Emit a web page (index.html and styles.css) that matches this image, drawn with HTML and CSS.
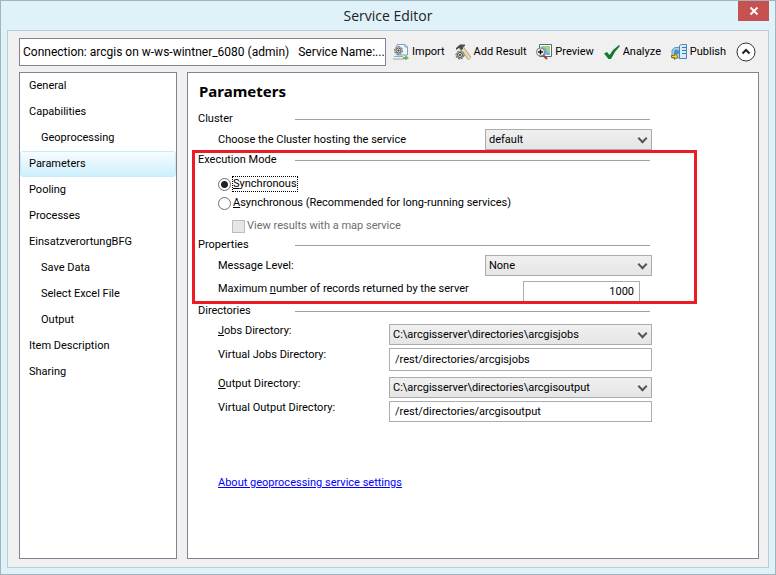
FILE: index.html
```html
<!DOCTYPE html>
<html lang="en">
<head>
    <meta charset="UTF-8">
    <title>Service Editor</title>
    <link rel="stylesheet" href="styles.css">
</head>
<body>
<div class="window">
    <header class="titlebar">
        <h1 class="title">Service Editor</h1>
        <button type="button" class="close" aria-label="Close">
            <svg width="10" height="8" viewBox="0 0 10 8"><path d="M1.5 .5L8.5 7.5M8.5 .5L1.5 7.5" stroke="#fff" stroke-width="2"/></svg>
        </button>
    </header>
    <div class="frame">
        <div class="toolbar">
            <div class="connection">
                <span>Connection: arcgis on w-ws-wintner_6080 (admin)</span>
                <span>Service Name:...</span>
            </div>
            <div class="tools">
                <button type="button" class="tool">
                    <svg width="16" height="16" viewBox="0 0 16 16">
                        <path d="M4 .5h8l2.500 2.500V11H4z" fill="#edf4fb" stroke="#7ba3c6"/>
                        <path d="M12 .5V3h2.500" fill="none" stroke="#7ba3c6"/>
                        <circle cx="5.500" cy="6.500" r="4" fill="#ccc" stroke="#666" stroke-dasharray="2 1"/>
                        <circle cx="5.500" cy="6.500" r="2.500" fill="#ddd" stroke="#555"/>
                        <circle cx="5.500" cy="6.500" r="1" fill="#333"/>
                        <path d="M1 12.500h9M0 15h11" stroke="#8fabc0"/>
                        <path d="M10 13h2v-2l4 3-4 2.500V15h-2z" fill="#74b352"/>
                    </svg>
                    Import
                </button>
                <button type="button" class="tool">
                    <svg width="16" height="16" viewBox="0 0 16 16">
                        <path d="M7 4l8 11" stroke="#86714e" stroke-width="4"/>
                        <path d="M7 4l8 11" stroke="#ead9ae" stroke-width="3"/>
                        <path d="M1 4l4-3.500h5V2L8 3v2L6 6 4 4 1 6z" fill="#4c4c4c"/>
                        <circle cx="5" cy="11" r="4" fill="#ccc" stroke="#555" stroke-dasharray="2 1"/>
                        <circle cx="5" cy="11" r="2.500" fill="#ddd" stroke="#444"/>
                        <circle cx="5" cy="11" r="1" fill="#333"/>
                    </svg>
                    Add Result
                </button>
                <button type="button" class="tool">
                    <svg width="16" height="16" viewBox="0 0 16 16">
                        <path d="M3.500 .5h12v12h-12z" fill="#fff" stroke="#4d6d86"/>
                        <path d="M5 2h9v9H5z" fill="#a9d47c"/>
                        <path d="M6 3l4 1 1 4 3 1v2H8z" fill="#6fb4dd"/>
                        <path d="M7 11l4 4" stroke="#a03c34" stroke-width="2"/>
                        <circle cx="4.500" cy="8" r="4" fill="#fff" stroke="#777"/>
                        <path d="M4.500 5.500v5M2 8h5" stroke="#111" stroke-width="1.500"/>
                    </svg>
                    Preview
                </button>
                <button type="button" class="tool">
                    <svg width="16" height="16" viewBox="0 0 16 16"><path d="M0 9.500L3 8l2.500 3Q9 5 15 1L16 2Q10 8 7 15H4.500z" fill="#157a30"/></svg>
                    Analyze
                </button>
                <button type="button" class="tool">
                    <svg width="16" height="16" viewBox="0 0 16 16">
                        <path d="M1 6l3-2.500h5V14H1z" fill="#a9d0ee" stroke="#5d93c0"/>
                        <circle cx="5.500" cy="8" r="2.500" fill="#4a90cf"/>
                        <path d="M8.500 1.500l2-1h5v14h-7z" fill="#d9ecfa" stroke="#4f83b0"/>
                        <path d="M11 3.500h4M11 6.500h4M11 9.500h4" stroke="#3e78b4"/>
                        <path d="M.5 11.500h3v-2l3.500 3-3.500 3v-2h-3z" fill="#f6d433" stroke="#8d7016"/>
                    </svg>
                    Publish
                </button>
                <button type="button" class="collapse" aria-label="Collapse">
                    <svg width="20" height="20" viewBox="0 0 20 20">
                        <circle cx="10" cy="10" r="9" fill="#fff" stroke="#333"/>
                        <path d="M6.500 11.500L10 8l3.500 3.500" fill="none" stroke="#222" stroke-width="2"/>
                    </svg>
                </button>
            </div>
        </div>
        <div class="panels">
            <nav class="sidebar">
                <a class="item" href="#">General</a>
                <a class="item" href="#">Capabilities</a>
                <a class="item child" href="#">Geoprocessing</a>
                <a class="item selected" href="#">Parameters</a>
                <a class="item" href="#">Pooling</a>
                <a class="item" href="#">Processes</a>
                <a class="item" href="#">EinsatzverortungBFG</a>
                <a class="item child" href="#">Save Data</a>
                <a class="item child" href="#">Select Excel File</a>
                <a class="item child" href="#">Output</a>
                <a class="item" href="#">Item Description</a>
                <a class="item" href="#">Sharing</a>
            </nav>
            <main class="content">
                <h2 class="heading">Parameters</h2>
                <section class="group">
                    <h3 class="legend">Cluster</h3>
                    <div class="row">
                        <label for="cluster">Choose the Cluster hosting the service</label>
                        <span class="picker short"><select id="cluster"><option>default</option></select></span>
                    </div>
                </section>
                <div class="highlight">
                    <section class="group">
                        <h3 class="legend">Execution Mode</h3>
                        <div class="modes">
                            <div class="option">
                                <input type="radio" name="mode" id="sync" checked>
                                <label for="sync" class="focused"><u>S</u>ynchronous</label>
                            </div>
                            <div class="option">
                                <input type="radio" name="mode" id="async">
                                <label for="async"><u>A</u>synchronous (Recommended for long-running services)</label>
                            </div>
                            <div class="option nested">
                                <input type="checkbox" id="mapservice" disabled>
                                <label for="mapservice">View results with a map service</label>
                            </div>
                        </div>
                    </section>
                    <section class="group">
                        <h3 class="legend">Properties</h3>
                        <div class="row">
                            <label for="level">Message Level:</label>
                            <span class="picker short"><select id="level"><option>None</option></select></span>
                        </div>
                        <div class="row records">
                            <label for="records">Maximum <u>n</u>umber of records returned by the server</label>
                            <input type="text" id="records" class="text number" value="1000">
                        </div>
                    </section>
                </div>
                <section class="group">
                    <h3 class="legend">Directories</h3>
                    <div class="directories">
                        <label for="jobs"><u>J</u>obs Directory:</label>
                        <span class="picker"><select id="jobs"><option>C:\arcgisserver\directories\arcgisjobs</option></select></span>
                        <label for="vjobs">Virtual Jobs Directory:</label>
                        <input type="text" id="vjobs" class="text" value="/rest/directories/arcgisjobs">
                        <label for="output" class="second"><u>O</u>utput Directory:</label>
                        <span class="picker second"><select id="output"><option>C:\arcgisserver\directories\arcgisoutput</option></select></span>
                        <label for="voutput">Virtual Output Directory:</label>
                        <input type="text" id="voutput" class="text" value="/rest/directories/arcgisoutput">
                    </div>
                </section>
                <a class="about" href="#">About geoprocessing service settings</a>
            </main>
        </div>
    </div>
</div>
</body>
</html>
```

FILE: styles.css
```css
*{
    box-sizing: border-box;
}
body{
    margin: 0;
    font: 11px/16px Roboto, sans-serif;
    color: #000;
}
button, input, select{
    font: inherit;
    color: inherit;
    margin: 0;
}
.window{
    display: flex;
    flex-direction: column;
    min-height: 100vh;
    padding: 0 6px 6px;
    background: #dff2f9;
    border: solid 1px #a3b5bb;
}
.titlebar{
    display: flex;
    height: 29px;
    position: relative;
    justify-content: center;
}
.title{
    margin: 0;
    font: 14px/30px "Open Sans", sans-serif;
    color: #222;
}
.close{
    position: absolute;
    right: 0;
    top: 0;
    width: 31px;
    height: 20px;
    padding: 0;
    border: 0;
    background: #c75050;
}
.close svg{
    display: block;
    margin: auto;
}
.frame{
    flex: 1;
    display: flex;
    flex-direction: column;
    gap: 6px;
    padding: 7px 9px 8px 11px;
    background: #f0f0f0;
    border: solid 1px #b9cdd3;
}
.toolbar{
    display: flex;
    gap: 7px;
}
.connection{
    display: flex;
    gap: 9px;
    width: 367px;
    height: 28px;
    padding-left: 3px;
    background: #fff;
    border: solid 1px #828297;
    font-size: 12px;
    line-height: 26px;
    white-space: nowrap;
    overflow: hidden;
}
.tools{
    flex: 1;
    display: flex;
    align-items: center;
    justify-content: space-between;
    padding-right: 3px;
}
.tool{
    display: flex;
    align-items: center;
    gap: 3px;
    padding: 0;
    border: 0;
    background: none;
    white-space: nowrap;
}
.collapse{
    padding: 0;
    border: 0;
    background: none;
}
.collapse svg{
    display: block;
}
.panels{
    flex: 1;
    display: flex;
    gap: 10px;
}
.sidebar{
    width: 158px;
    background: #fff;
    border: solid 1px #828297;
}
.item{
    display: block;
    height: 26px;
    padding-left: 8px;
    border: solid 1px transparent;
    border-radius: 3px;
    line-height: 24px;
    color: #000;
    text-decoration: none;
}
.child{
    padding-left: 20px;
}
.selected{
    border-color: #c5ecfb;
    background: linear-gradient(#f8fcfe, #cdeffc);
}
.content{
    flex: 1;
    padding: 6px 61px 0 4px;
    background: #fff;
    border: solid 1px #828297;
}
.heading{
    margin: 0 0 9px 7px;
    font: bold 15px/24px "Noto Sans", sans-serif;
}
.group{
    padding: 0 45px 0 6px;
}
.legend{
    display: grid;
    grid-template-columns: 97px 1fr;
    align-items: center;
    margin: 0 2px 3px 0;
    font-size: 11px;
    font-weight: normal;
    line-height: 14px;
}
.legend::after{
    content: "";
    height: 1px;
    background: #a0a0a0;
}
.highlight{
    border: solid 3px #ed1c24;
}
.highlight .group{
    padding: 0 42px 0 3px;
}
.row{
    display: flex;
    justify-content: space-between;
    align-items: center;
    padding-left: 20px;
}
.records{
    align-items: flex-start;
    margin-top: 5px;
}

/* selects */
.picker{
    display: block;
    position: relative;
    height: 21px;
}
.picker::after{
    content: "";
    position: absolute;
    right: 6px;
    top: 6px;
    width: 5px;
    height: 5px;
    border: solid #555;
    border-width: 0 2px 2px 0;
    transform: rotate(45deg);
    pointer-events: none;
}
.short{
    width: 167px;
}
.picker select{
    display: block;
    appearance: none;
    width: 100%;
    height: 21px;
    padding: 0 16px 0 3px;
    border: solid 1px #acacac;
    border-radius: 0;
    background: linear-gradient(#f0f0f0, #e5e5e5);
}
.text{
    height: 21px;
    padding: 0 5px;
    border: solid 1px #abadb3;
    background: #fff;
}
.number{
    width: 117px;
    height: 20px;
    margin-right: 12px;
    border-bottom: 0;
    text-align: right;
}

/* radio buttons and check box */
.modes{
    display: flex;
    flex-direction: column;
    gap: 1px;
    padding: 5px 0 3px 20px;
}
.option{
    display: flex;
    align-items: center;
    gap: 2px;
    height: 18px;
}
.option input{
    appearance: none;
    width: 13px;
    height: 13px;
    border: solid 1px #707070;
    border-radius: 50%;
    background: #fff;
}
.option input:checked{
    background: radial-gradient(#222 3px, #fff 4px);
}
.option label{
    line-height: 14px;
}
.option .focused{
    outline: dotted 1px #000;
}
.nested{
    margin: 4px 0 0 14px;
    color: #6d6d6d;
}
.option input:disabled{
    border-color: #bcbcbc;
    border-radius: 0;
    background: #e6e6e6;
}

.directories{
    display: grid;
    grid-template-columns: 1fr 263px;
    align-items: start;
    gap: 3px 0;
    padding: 3px 0 0 20px;
    line-height: 14px;
}
#vjobs{
    height: 23px;
}
.second{
    margin-top: 3px;
}
.about{
    display: inline-block;
    margin: 53px 0 0 26px;
    color: #00f;
}
```
